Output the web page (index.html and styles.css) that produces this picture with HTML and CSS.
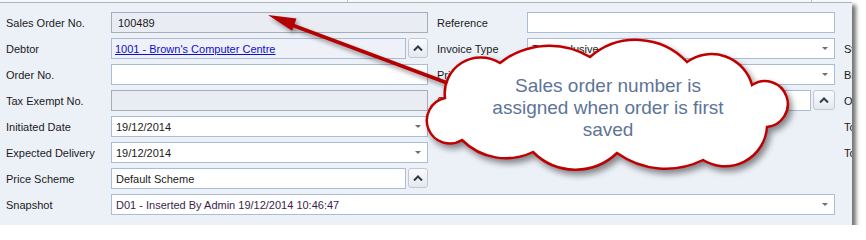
FILE: index.html
```html
<!DOCTYPE html>
<html lang="en">
  <head>
    <meta charset="UTF-8" />
    <meta name="viewport" content="width=device-width, initial-scale=1.0" />
    <title>Sales Order</title>
    <link rel="stylesheet" href="styles.css">
  </head>
  <body>
    <div class="window">
      <div class="tab-strip">
        <span class="tab tab-a"></span>
        <span class="tab tab-b"></span>
      </div>

      <div class="order-form">
        <!-- row 1 -->
        <label class="field-label">Sales Order No.</label>
        <div class="box readonly order-number">100489</div>
        <label class="field-label col-2">Reference</label>
        <div class="box"></div>
        <span></span>

        <!-- row 2 -->
        <label class="field-label">Debtor</label>
        <div class="with-button">
          <div class="box lookup"><a href="#" class="link">1001 - Brown's Computer Centre</a></div>
          <button class="up-button" aria-label="Lookup">
            <svg width="10" height="6" viewBox="0 0 10 6"><polyline points="1,5.5 5,1.5 9,5.5" /></svg>
          </button>
        </div>
        <label class="field-label col-2">Invoice Type</label>
        <div class="box dropdown">Tax Exclusive</div>
        <label class="field-label col-3">Status</label>

        <!-- row 3 -->
        <label class="field-label">Order No.</label>
        <div class="box"></div>
        <label class="field-label col-2">Price List</label>
        <div class="box dropdown"></div>
        <label class="field-label col-3">Branch</label>

        <!-- row 4 -->
        <label class="field-label">Tax Exempt No.</label>
        <div class="box readonly"></div>
        <label class="field-label col-2">Sales Rep</label>
        <div class="with-button">
          <div class="box"></div>
          <button class="up-button wide" aria-label="Lookup">
            <svg width="10" height="6" viewBox="0 0 10 6"><polyline points="1,5.5 5,1.5 9,5.5" /></svg>
          </button>
        </div>
        <label class="field-label col-3">Opportunity</label>

        <!-- row 5 -->
        <label class="field-label">Initiated Date</label>
        <div class="box dropdown">19/12/2014</div>
        <span></span>
        <span></span>
        <label class="field-label col-3">Total Ex Tax</label>

        <!-- row 6 -->
        <label class="field-label">Expected Delivery</label>
        <div class="box dropdown">19/12/2014</div>
        <span></span>
        <span></span>
        <label class="field-label col-3">Total Tax</label>

        <!-- row 7 -->
        <label class="field-label">Price Scheme</label>
        <div class="with-button">
          <div class="box">Default Scheme</div>
          <button class="up-button" aria-label="Lookup">
            <svg width="10" height="6" viewBox="0 0 10 6"><polyline points="1,5.5 5,1.5 9,5.5" /></svg>
          </button>
        </div>
        <span></span>
        <span></span>
        <span></span>

        <!-- row 8 -->
        <label class="field-label">Snapshot</label>
        <div class="box dropdown snapshot">D01 - Inserted By Admin 19/12/2014 10:46:47</div>
      </div>

      <svg class="callout" width="852" height="225" viewBox="0 0 852 225">
        <g class="callout-arrow">
          <line x1="450" y1="84" x2="292" y2="25" />
          <polygon points="268,15 296.5,18.5 292.1,30.7" />
        </g>
        <path class="cloud" d="M 445 98 A 36 36 0 0 1 500 63 A 79 79 0 0 1 590 57 A 70 70 0 0 1 687 62 A 42 42 0 0 1 752 85 A 23 23 0 1 1 767 127 A 42 42 0 0 1 703 160 A 84 84 0 0 1 617 153 A 60 60 0 0 1 533 152 A 62 62 0 0 1 462 140 A 23 23 0 1 1 445 98 Z" />
        <text class="callout-text" x="608" y="92">Sales order number is</text>
        <text class="callout-text" x="608" y="114">assigned when order is first</text>
        <text class="callout-text" x="608" y="136">saved</text>
      </svg>
    </div>
  </body>
</html>
```

FILE: styles.css
```css
body {
  margin: 0;
  background-color: #fff;
  font-family: "Liberation Sans", Arial, sans-serif;
  font-size: 11px;
  color: #1b1b1b;
}

.window {
  position: relative;
  width: 852px;
  height: 225px;
  background-color: #ecf0f7;
  box-shadow: 4px 5px 4px rgba(0, 0, 0, 0.55);
  overflow: hidden;
}

.tab-strip {
  display: flex;
  height: 2px;
  background-color: #f6f7f9;
  border-bottom: 1px solid #aeb4be;
}

.tab {
  border-right: 1px solid #c3c7cf;
}

.tab-a {
  width: 347px;
}

.tab-b {
  width: 463px;
}

.order-form {
  display: grid;
  grid-template-columns: 105px 317px 99px 308px 1fr;
  grid-auto-rows: 21px;
  row-gap: 5px;
  padding: 9px 0 0 6px;
}

.field-label {
  display: flex;
  align-items: center;
  white-space: nowrap;
  overflow: hidden;
}

.field-label.col-2 {
  padding-left: 9px;
}

.field-label.col-3 {
  padding-left: 9px;
}

.box {
  display: flex;
  align-items: center;
  box-sizing: border-box;
  height: 21px;
  padding: 0 4px;
  background-color: #fff;
  border: 1px solid #abbcd6;
  white-space: nowrap;
  overflow: hidden;
}

.box.readonly {
  background-color: #e9ecf3;
  border-color: #a7adb8;
}

.box.order-number {
  padding-left: 6px;
}

.box.lookup {
  background-color: #eef1f8;
  padding-left: 3px;
}

.box.dropdown::after {
  content: "";
  margin-left: auto;
  margin-right: 2px;
  border-left: 3px solid transparent;
  border-right: 3px solid transparent;
  border-top: 3px solid #6f6f6f;
}

.box.snapshot {
  grid-column: 2 / 5;
  color: #3b1d4c;
}

.link {
  color: #0f0fcc;
  text-decoration: underline;
}

.with-button {
  display: flex;
  gap: 2px;
}

.with-button .box {
  flex: 1;
}

.up-button {
  display: flex;
  align-items: center;
  justify-content: center;
  width: 20px;
  height: 20px;
  padding: 0;
  box-sizing: border-box;
  border: 1px solid #c2c8d3;
  border-radius: 3px;
  background: linear-gradient(#fafbfd, #e5e8ef);
}

.up-button.wide {
  width: 22px;
}

.up-button polyline {
  fill: none;
  stroke: #2e3b4b;
  stroke-width: 2;
}

.callout {
  position: absolute;
  left: 0;
  top: 0;
}

.callout-arrow {
  filter: drop-shadow(2px 3px 2px rgba(0, 0, 0, 0.4));
}

.callout-arrow line {
  stroke: #b40000;
  stroke-width: 3.5;
}

.callout-arrow polygon {
  fill: #b40000;
}

.cloud {
  fill: #fff;
  stroke: #c00000;
  stroke-width: 2.5;
  filter: drop-shadow(3px 4px 3px rgba(0, 0, 0, 0.45));
}

.callout-text {
  font-family: "Liberation Sans", Arial, sans-serif;
  font-size: 19px;
  fill: #5d7497;
  text-anchor: middle;
}
```
